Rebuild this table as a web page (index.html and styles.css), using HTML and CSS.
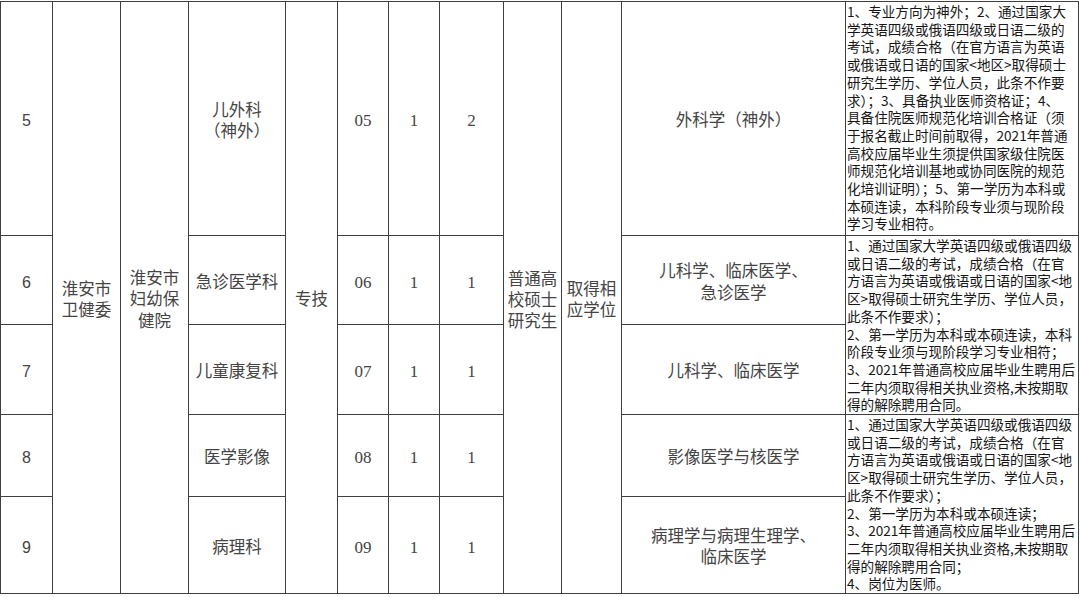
FILE: index.html
```html
<!DOCTYPE html>
<html lang="zh-CN">
<head>
<meta charset="utf-8">
<title>岗位表</title>
<link rel="stylesheet" href="styles.css">
</head>
<body>
<table class="jobs">
  <colgroup>
    <col class="c-seq"><col class="c-dept"><col class="c-unit"><col class="c-post"><col class="c-type">
    <col class="c-code"><col class="c-num"><col class="c-ratio"><col class="c-edu"><col class="c-deg">
    <col class="c-major"><col class="c-req">
  </colgroup>
  <tr class="r5">
    <td class="seq">5</td>
    <td rowspan="5">淮安市<br>卫健委</td>
    <td rowspan="5">淮安市<br>妇幼保<br>健院</td>
    <td>儿外科<br>（神外）</td>
    <td rowspan="5">专技</td>
    <td class="num">05</td>
    <td class="num">1</td>
    <td class="num">2</td>
    <td rowspan="5" class="tight">普通高<br>校硕士<br>研究生</td>
    <td rowspan="5" class="tight">取得相<br>应学位</td>
    <td>外科学（神外）</td>
    <td class="req">1、专业方向为神外；2、通过国家大<br>学英语四级或俄语四级或日语二级的<br>考试，成绩合格（在官方语言为英语<br>或俄语或日语的国家&lt;地区&gt;取得硕士<br>研究生学历、学位人员，此条不作要<br>求）；3、具备执业医师资格证；4、<br>具备住院医师规范化培训合格证（须<br>于报名截止时间前取得，2021年普通<br>高校应届毕业生须提供国家级住院医<br>师规范化培训基地或协同医院的规范<br>化培训证明）；5、第一学历为本科或<br>本硕连读，本科阶段专业须与现阶段<br>学习专业相符。</td>
  </tr>
  <tr class="r6">
    <td class="seq">6</td>
    <td>急诊医学科</td>
    <td class="num">06</td>
    <td class="num">1</td>
    <td class="num">1</td>
    <td>儿科学、临床医学、<br>急诊医学</td>
    <td rowspan="2" class="req">1、通过国家大学英语四级或俄语四级<br>或日语二级的考试，成绩合格（在官<br>方语言为英语或俄语或日语的国家&lt;地<br>区&gt;取得硕士研究生学历、学位人员，<br>此条不作要求）；<br>2、第一学历为本科或本硕连读，本科<br>阶段专业须与现阶段学习专业相符；<br>3、2021年普通高校应届毕业生聘用后<br>二年内须取得相关执业资格,未按期取<br>得的解除聘用合同。</td>
  </tr>
  <tr class="r7">
    <td class="seq">7</td>
    <td>儿童康复科</td>
    <td class="num">07</td>
    <td class="num">1</td>
    <td class="num">1</td>
    <td>儿科学、临床医学</td>
  </tr>
  <tr class="r8">
    <td class="seq">8</td>
    <td>医学影像</td>
    <td class="num">08</td>
    <td class="num">1</td>
    <td class="num">1</td>
    <td>影像医学与核医学</td>
    <td rowspan="2" class="req">1、通过国家大学英语四级或俄语四级<br>或日语二级的考试，成绩合格（在官<br>方语言为英语或俄语或日语的国家&lt;地<br>区&gt;取得硕士研究生学历、学位人员，<br>此条不作要求）；<br>2、第一学历为本科或本硕连读；<br>3、2021年普通高校应届毕业生聘用后<br>二年内须取得相关执业资格,未按期取<br>得的解除聘用合同；<br>4、岗位为医师。</td>
  </tr>
  <tr class="r9">
    <td class="seq">9</td>
    <td>病理科</td>
    <td class="num">09</td>
    <td class="num">1</td>
    <td class="num">1</td>
    <td>病理学与病理生理学、<br>临床医学</td>
  </tr>
</table>
</body>
</html>
```

FILE: styles.css
```css
html, body {
  margin: 0;
  padding: 0;
  background: #ffffff;
}

body {
  padding-top: 1px;
}

.jobs {
  border-collapse: collapse;
  table-layout: fixed;
  width: 1078px;
  font-family: "Liberation Serif", "Noto Sans CJK SC", serif;
  font-size: 16.5px;
  line-height: 21.5px;
  color: #444444;
}

.c-seq { width: 52px; }
.c-dept { width: 68px; }
.c-unit { width: 68px; }
.c-post { width: 97px; }
.c-type { width: 52px; }
.c-code { width: 51px; }
.c-num { width: 51px; }
.c-ratio { width: 64px; }
.c-edu { width: 58px; }
.c-deg { width: 60px; }
.c-major { width: 224px; }
.c-req { width: 233px; }

.jobs td {
  border: 1px solid #3f3f3f;
  padding: 5px 0 0 0;
  text-align: center;
  vertical-align: middle;
  white-space: nowrap;
  overflow: hidden;
}

.r5 { height: 234px; }
.r6 { height: 89px; }
.r7 { height: 90px; }
.r8 { height: 81px; }
.r9 { height: 97px; }

.jobs .seq {
  font-family: "Liberation Sans", "Noto Sans CJK SC", sans-serif;
  font-size: 16px;
}

.jobs .num {
  font-size: 17px;
}

.jobs .tight {
  line-height: 21px;
}

.jobs .req {
  font-family: "Noto Sans CJK SC", "Liberation Sans", sans-serif;
  font-size: 13.6px;
  line-height: 17.7px;
  color: #161616;
  text-align: left;
  vertical-align: top;
  padding: 1px 0 0 1px;
}
```
